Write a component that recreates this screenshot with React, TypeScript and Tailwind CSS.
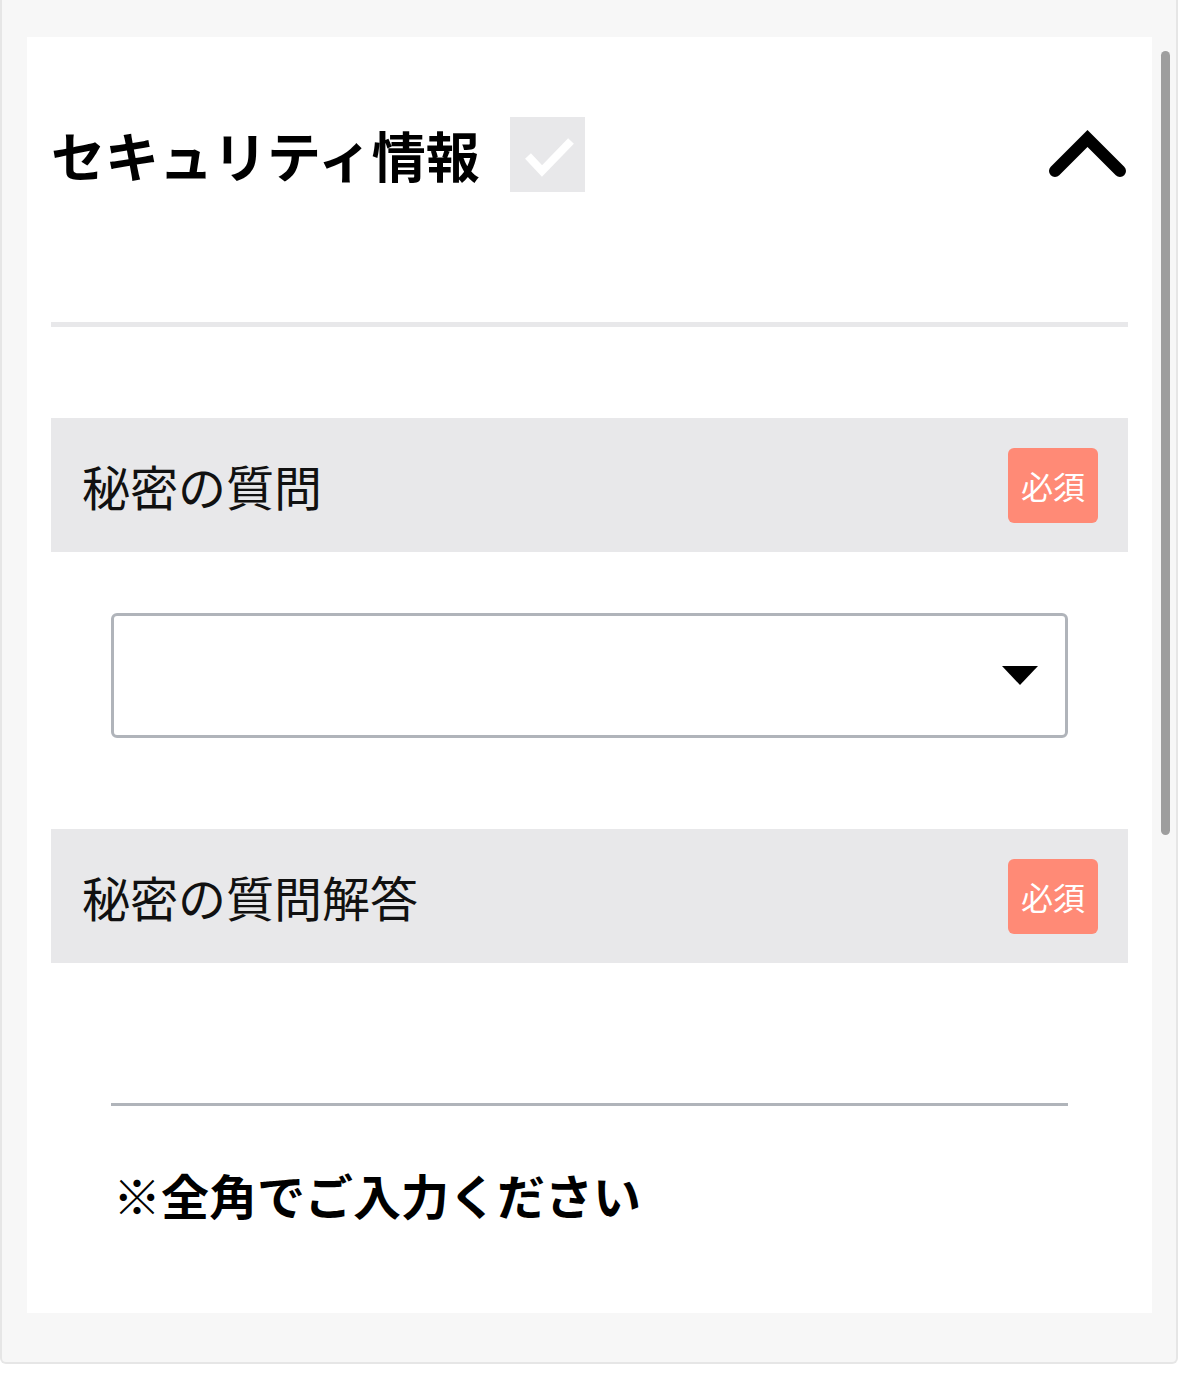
import React from "react";

const font = { fontFamily: '"Noto Sans CJK JP", "Noto Sans", sans-serif' };

function SectionHeader({ label }: { label: string }) {
  return (
    <div className="flex h-[134px] items-center justify-between bg-[#e8e8ea] pl-[31px] pr-[30px]">
      <span className="text-[48px] font-normal leading-none text-[#111]">{label}</span>
      <span className="flex h-[75px] w-[90px] items-center justify-center rounded-[6px] bg-[#ff8a76] text-[32px] leading-none text-white">
        必須
      </span>
    </div>
  );
}

export default function App() {
  return (
    <div className="min-h-[1379px] bg-white" style={font}>
      <div className="relative h-[1364px] w-[1178px] rounded-b-[6px] border-x-2 border-b-2 border-[#e6e6e6] bg-[#f7f7f7] pl-[25px] pr-[24px] pt-[37px]">
        <div className="absolute left-[1159px] top-[51px] h-[784px] w-[9px] rounded-full bg-[#9e9e9e]" />
        <div className="flex h-[1276px] flex-col bg-white px-[24px] pt-[80px]">
          <div className="flex h-[75px] items-center justify-between">
            <div className="flex items-center gap-[30px]">
              <h1 className="text-[54px] font-bold leading-none text-black">セキュリティ情報</h1>
              <div className="h-[75px] w-[75px] bg-[#e8e8ea]">
                <svg width="75" height="75" viewBox="0 0 75 75">
                  <path d="M18 39 L32 54 L61 24" fill="none" stroke="white" strokeWidth="8" strokeLinecap="butt" strokeLinejoin="miter" />
                </svg>
              </div>
            </div>
            <svg width="79" height="49" viewBox="0 0 79 49" className="mr-[1px]">
              <path d="M7 41 L39.5 8.5 L72 41" fill="none" stroke="black" strokeWidth="12" strokeLinecap="round" strokeLinejoin="miter" />
            </svg>
          </div>
          <div className="mt-[130px] h-[5px] bg-[#e8e8ea]" />
          <div className="mt-[91px]">
            <SectionHeader label="秘密の質問" />
          </div>
          <div className="mx-[60px] mt-[61px] flex h-[125px] items-center justify-end rounded-[6px] border-[3px] border-[#b0b4ba] pr-[27px]">
            <svg width="36" height="19" viewBox="0 0 36 19">
              <path d="M0 0 L36 0 L18 19 Z" fill="black" />
            </svg>
          </div>
          <div className="mt-[91px]">
            <SectionHeader label="秘密の質問解答" />
          </div>
          <div className="mx-[60px] mt-[16px] h-[127px] border-b-[3px] border-[#b0b4ba]" />
          <p className="ml-[62px] mt-[64px] text-[48px] font-bold leading-none text-black">※全角でご入力ください</p>
        </div>
      </div>
    </div>
  );
}
